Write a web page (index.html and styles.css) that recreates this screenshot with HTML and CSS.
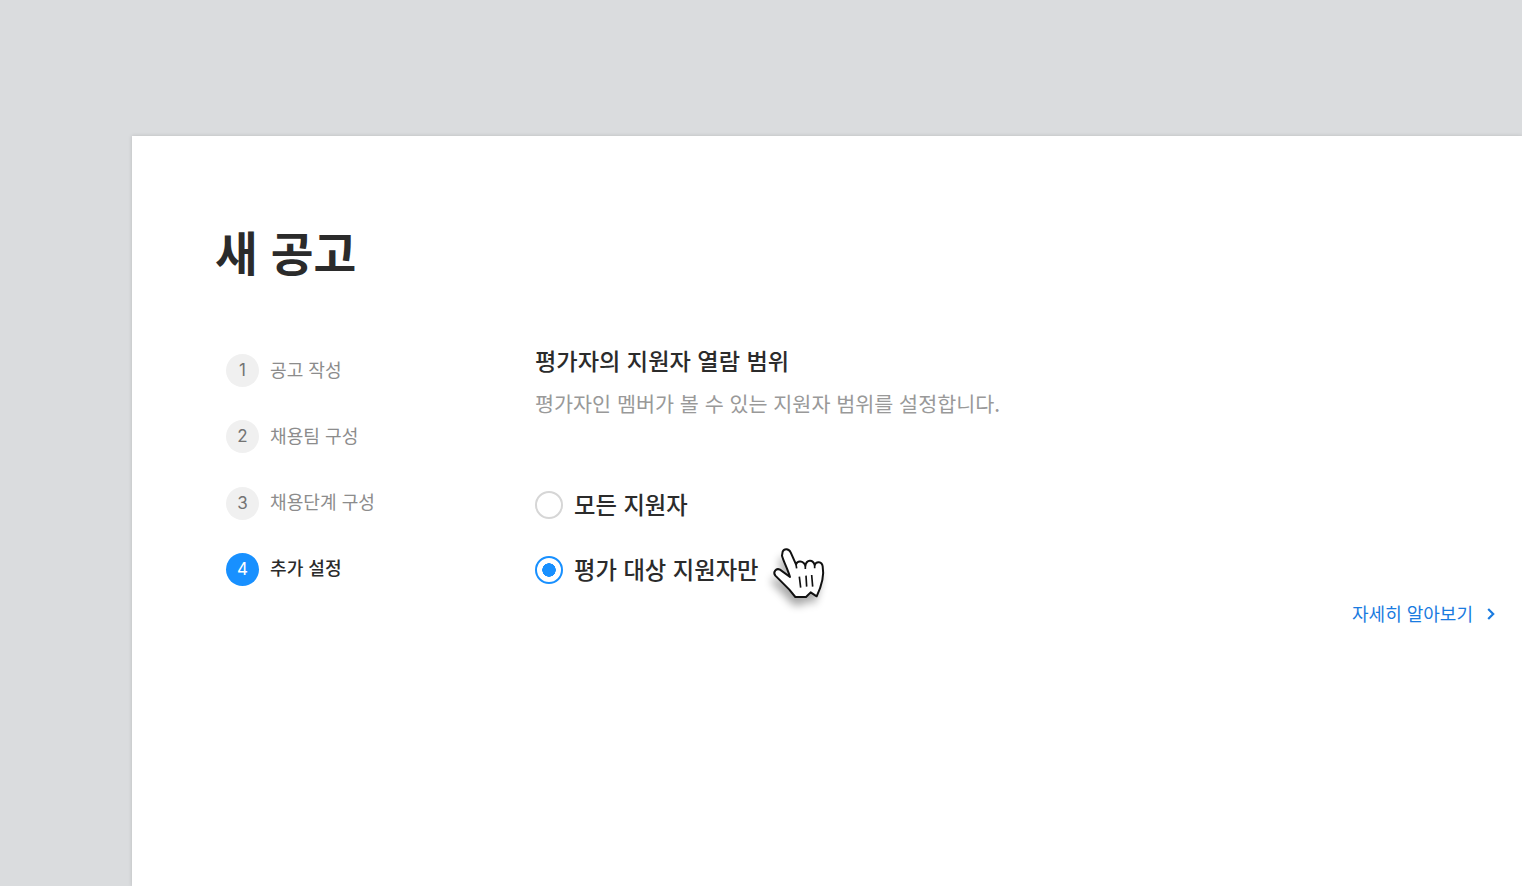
FILE: index.html
```html
<!DOCTYPE html>
<html lang="ko">
<head>
    <meta charset="UTF-8">
    <title>새 공고</title>
    <link rel="stylesheet" href="styles.css">
</head>
<body>
    <div class="card">
        <h1>새 공고</h1>
        <div class="columns">
            <ol class="steps">
                <li class="step"><span class="num">1</span><span class="label">공고 작성</span></li>
                <li class="step"><span class="num">2</span><span class="label">채용팀 구성</span></li>
                <li class="step"><span class="num">3</span><span class="label">채용단계 구성</span></li>
                <li class="step active"><span class="num">4</span><span class="label">추가 설정</span></li>
            </ol>
            <div class="content">
                <div class="section-title">평가자의 지원자 열람 범위</div>
                <div class="section-desc">평가자인 멤버가 볼 수 있는 지원자 범위를 설정합니다.</div>
                <div class="options">
                    <div class="option"><span class="radio"></span>모든 지원자</div>
                    <div class="option"><span class="radio checked"></span>평가 대상 지원자만</div>
                </div>
                <a class="more" href="#">자세히 알아보기
                    <svg class="chevron" width="10" height="14" viewBox="0 0 10 14"><path d="M2.2 2 L7.2 7 L2.2 12" fill="none" stroke="#1a7be0" stroke-width="2.2"/></svg>
                </a>
            </div>
        </div>
        <svg class="hand" width="80" height="80" viewBox="0 0 240 240">
            <defs><filter id="soft" x="-40%" y="-40%" width="180%" height="180%"><feGaussianBlur stdDeviation="13"/></filter></defs>
            <path d="M68 50 C72 40 86 40 92 52 L108 88 C112 76 130 76 136 92 C140 74 158 72 164 90 C168 78 186 78 188 94 C192 115 186 150 170 184 L152 172 L138 186 L106 186 L88 164 L46 122 C38 112 48 98 60 104 L90 126 C84 104 70 78 66 62 Z" fill="#000" opacity=".34" filter="url(#soft)" transform="translate(-8 24)"/>
            <path d="M68 50 C72 40 86 40 92 52 L108 88 C112 76 130 76 136 92 C140 74 158 72 164 90 C168 78 186 78 188 94 C192 115 186 150 170 184 L152 172 L138 186 L106 186 L88 164 L46 122 C38 112 48 98 60 104 L90 126 C84 104 70 78 66 62 Z" fill="#fff" stroke="#111" stroke-width="6" stroke-linejoin="round"/>
            <path d="M118 125 L122 158 M138 122 L140 155 M155 120 L158 155 M136 92 L136 102 M164 90 L164 100 M108 88 L110 100" fill="none" stroke="#111" stroke-width="5"/>
        </svg>
    </div>
</body>
</html>
```

FILE: styles.css
```css
html, body {
    height: 100%;
}
body {
    margin: 0;
    padding: 136px 0 0 132px;
    box-sizing: border-box;
    overflow: hidden;
    background-color: #dadcde;
    font-family: "Noto Sans CJK KR", "Noto Sans", sans-serif;
    color: #2b2b2b;
}
.card {
    position: relative;
    height: 100%;
    padding: 83px 26px 0 84px;
    box-sizing: border-box;
    background: #ffffff;
    box-shadow: 0 0 4px rgba(0, 0, 0, 0.15);
}
h1 {
    margin: 0 0 0 -1px;
    font-size: 46.5px;
    line-height: 64px;
    font-weight: 700;
}
.columns {
    display: flex;
    margin-top: 71px;
}
.steps {
    width: 319px;
    flex: none;
    margin: 0;
    padding: 0 0 0 10px;
    box-sizing: border-box;
    list-style: none;
}
.step {
    display: flex;
    align-items: center;
    gap: 11px;
    height: 33px;
    margin-bottom: 33.3px;
    font-size: 18.1px;
    color: #8c8c8c;
}
.label {
    padding-bottom: 4px;
}
.step.active {
    color: #2b2b2b;
    font-weight: 500;
}
.num {
    width: 33px;
    height: 33px;
    box-sizing: border-box;
    padding-bottom: 1px;
    display: flex;
    align-items: center;
    justify-content: center;
    border-radius: 50%;
    background-color: #f0f0f0;
    color: #737373;
    font-family: "Inter", sans-serif;
    font-size: 17px;
    font-weight: 400;
}
.active .num {
    background-color: #1890ff;
    color: #ffffff;
}
.content {
    flex: 1;
    display: flex;
    flex-direction: column;
    margin-top: -11px;
}
.section-title {
    font-size: 23.2px;
    line-height: 34px;
    font-weight: 500;
}
.section-desc {
    margin-top: 10px;
    font-size: 20.7px;
    line-height: 32px;
    color: #999999;
}
.options {
    margin-top: 68px;
}
.option {
    display: flex;
    align-items: center;
    gap: 11px;
    height: 34px;
    margin-bottom: 31px;
    font-size: 23.3px;
    font-weight: 500;
}
.radio {
    width: 28px;
    height: 28px;
    margin-top: 2px;
    box-sizing: border-box;
    border: 2px solid #d6d6d6;
    border-radius: 50%;
    background: #ffffff;
}
.radio.checked {
    border-color: #1890ff;
    background: radial-gradient(circle, #1890ff 0 6.5px, #ffffff 7px);
}
.more {
    align-self: flex-end;
    display: flex;
    align-items: center;
    gap: 13px;
    margin-top: -18px;
    font-size: 18px;
    line-height: 28px;
    color: #1a7be0;
    text-decoration: none;
}
.chevron {
    margin-top: 2px;
}
.hand {
    position: absolute;
    left: 628px;
    top: 399px;
}
```
